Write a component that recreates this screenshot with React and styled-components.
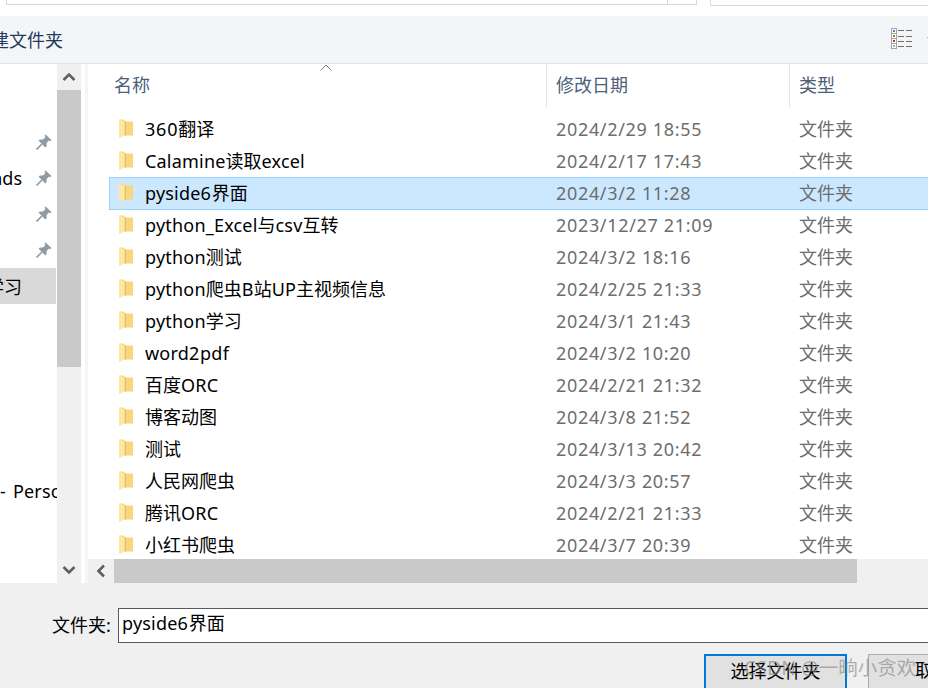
import React from "react";
import styled, { createGlobalStyle } from "styled-components";

const Global = createGlobalStyle`
  html, body { margin: 0; padding: 0; height: 688px; overflow: hidden; background: #fff; }
  body { font-family: "Noto Sans", "Noto Sans CJK SC", sans-serif; font-size: 18px; }
  #root { height: 688px; overflow: hidden; }
`;

const Dialog = styled.div`
  position: relative;
  width: 928px;
  height: 688px;
  display: flex;
  flex-direction: column;
  overflow: hidden;
`;

const TopStrip = styled.div`
  height: 16px;
  flex: none;
  display: flex;
  gap: 13px;
  padding-left: 6px;
  background: #fff;
`;
const PathBox = styled.div`
  width: 691px;
  height: 5px;
  box-sizing: border-box;
  display: flex;
  justify-content: flex-end;
  border-left: 1px solid #d9d9d9;
  border-right: 1px solid #d9d9d9;
  border-bottom: 1px solid #d9d9d9;
`;
const PathDrop = styled.div`
  width: 28px;
  border-left: 1px solid #d9d9d9;
`;
const SearchBox = styled.div`
  flex: 1;
  height: 5px;
  border-left: 1px solid #d9d9d9;
  border-bottom: 1px solid #d9d9d9;
`;

const Toolbar = styled.div`
  height: 48px;
  flex: none;
  box-sizing: border-box;
  display: flex;
  align-items: center;
  justify-content: space-between;
  padding-bottom: 2px;
  background: #f4f5f7;
  border-bottom: 1px solid #e3e3e3;
  color: #1e3a5c;
`;
const NewFolder = styled.div`
  margin-left: -27px;
  white-space: nowrap;
`;
const ViewButton = styled.div`
  display: flex;
`;

const Body = styled.div`
  height: 519px;
  flex: none;
  display: flex;
  background: #fff;
`;
const Sidebar = styled.div`
  width: 57px;
  flex: none;
  overflow: hidden;
  padding-top: 60px;
  box-sizing: border-box;
`;
const NavRow = styled.div`
  height: 36px;
  width: 56px;
  display: grid;
  grid-template-columns: 22px 14px 16px;
  align-items: center;
  background: ${(p) => (p.$active ? "#d9d9d9" : "transparent")};
  color: #000;
`;
const NavLabel = styled.div`
  display: flex;
  justify-content: flex-end;
  overflow: hidden;
  white-space: nowrap;
`;
const NavFree = styled.div`
  margin-top: 169px;
  height: 36px;
  line-height: 36px;
  white-space: nowrap;
  letter-spacing: 0.2px;
  word-spacing: 2px;
  color: #000;
`;
const PinSlot = styled.div`
  grid-column: 3;
  display: flex;
`;

const VScroll = styled.div`
  width: 24px;
  flex: none;
  display: flex;
  flex-direction: column;
  background: #f0f0f0;
`;
const ScrollBtn = styled.div`
  height: 26px;
  flex: none;
  display: flex;
  align-items: center;
  justify-content: center;
`;
const VTrack = styled.div`
  flex: 1;
  padding-bottom: 190px;
  display: flex;
`;
const VThumb = styled.div`
  flex: 1;
  background: #c9c9c9;
`;
const Splitter = styled.div`
  width: 7px;
  flex: none;
  background: linear-gradient(to right, #fff 4px, #f5f5f5 4px);
`;

const Main = styled.div`
  flex: 1;
  min-width: 0;
  display: flex;
  flex-direction: column;
`;
const ListArea = styled.div`
  flex: 1;
  min-height: 0;
  overflow: hidden;
`;
const Columns = `
  display: grid;
  grid-template-columns: 437px 243px 1fr;
  margin-left: 21px;
`;
const Header = styled.div`
  ${Columns}
  position: relative;
  height: 40px;
  margin-bottom: 9px;
  color: #4c607a;
`;
const HeadCell = styled.div`
  box-sizing: border-box;
  padding-left: ${(p) => (p.$first ? "5px" : "9px")};
  border-left: ${(p) => (p.$first ? "none" : "1px solid #e5e5e5")};
  line-height: 43px;
`;
const SortArrow = styled.svg`
  position: absolute;
  left: 211px;
  top: 0;
`;
const Row = styled.div`
  ${Columns}
  height: 32px;
  line-height: 32px;
  background: ${(p) => (p.$selected ? "#cce8ff" : "transparent")};
  box-shadow: ${(p) =>
    p.$selected
      ? "inset 0 1px #99d1ff, inset 1px 0 #99d1ff, 0 1px #99d1ff"
      : "none"};
`;
const NameCell = styled.div`
  display: flex;
  align-items: center;
  gap: 11px;
  padding-left: 9px;
  color: #000;
  white-space: nowrap;
`;
const MetaCell = styled.div`
  padding-left: 10px;
  color: #6d6d6d;
  white-space: nowrap;
  letter-spacing: ${(p) => (p.$date ? "0.67px" : "0")};
`;
const Digits = styled.span`
  letter-spacing: 0.8px;
`;
const Letters = styled.span`
  letter-spacing: 0.2px;
`;

const HScroll = styled.div`
  height: 24px;
  flex: none;
  display: flex;
  background: #f0f0f0;
`;
const HBtn = styled.div`
  width: 26px;
  flex: none;
  display: flex;
  align-items: center;
  justify-content: center;
`;
const HThumb = styled.div`
  width: 743px;
  background: #c9c9c9;
`;

const Footer = styled.div`
  flex: 1;
  background: #f0f0f0;
  padding-top: 25px;
  display: flex;
  flex-direction: column;
  gap: 11px;
`;
const FieldRow = styled.div`
  display: flex;
  align-items: center;
  padding-left: 52px;
  gap: 7px;
  color: #000;
`;
const FieldLabel = styled.div`
  white-space: nowrap;
  width: 59px;
  padding-bottom: 3px;
`;
const FieldInput = styled.div`
  flex: 1;
  height: 35px;
  box-sizing: border-box;
  margin-right: -4px;
  background: #fff;
  border: 1px solid #5a5a5a;
  border-right: none;
  padding-left: 3px;
  line-height: 29px;
`;
const ButtonRow = styled.div`
  display: flex;
  padding-left: 704px;
  gap: 21px;
`;
const DialogButton = styled.div`
  box-sizing: border-box;
  flex: none;
  height: 40px;
  background: #e1e1e1;
  border: ${(p) => (p.$primary ? "2px solid #0078d7" : "1px solid #adadad")};
  color: #000;
  white-space: nowrap;
  width: ${(p) => (p.$primary ? "143px" : "100px")};
  padding-left: ${(p) => (p.$primary ? "0" : "46px")};
  line-height: 31px;
  text-align: ${(p) => (p.$primary ? "center" : "left")};
`;
const Watermark = styled.div`
  position: absolute;
  left: 744px;
  top: 654px;
  font-size: 19.5px;
  line-height: 28px;
  color: rgba(130, 130, 130, 0.62);
  white-space: nowrap;
`;

const Pin = () => (
  <svg width="16" height="16" viewBox="0 0 16 16">
    <path
      d="M9.5 0.5L15.5 6L14.3 7.2L13 6.6L10.6 9L10.6 12.3L9.4 13.5L2.6 6.8L3.8 5.6L7 5.6L9.4 3.2L8.6 1.6Z"
      fill="#8f9aa3"
    />
    <path d="M6 10L0.5 15.5" stroke="#8f9aa3" strokeWidth="1.6" />
  </svg>
);

const Folder = () => (
  <svg width="16" height="20" viewBox="0 0 16 20" style={{ flex: "none" }}>
    <path d="M1 0.5H6L7 2.5H15V16.5H1Z" fill="#f6d67f" />
    <rect x="6.5" y="2.5" width="1.5" height="14" fill="#e9bf5e" />
    <path d="M1 0.5L6.5 2.5V16.5L1 19.5Z" fill="#fde7a3" />
  </svg>
);

const Chevron = ({ d }) => (
  <svg width="14" height="12" viewBox="0 0 14 12">
    <path d={d} fill="none" stroke="#5f5f5f" strokeWidth="2.6" />
  </svg>
);

const ViewIcon = () => (
  <svg width="37" height="22" viewBox="0 0 37 22">
    <rect x="0.5" y="0.5" width="5" height="20" fill="#fff" stroke="#a6a6a6" />
    <path d="M0 5.5H6M0 10.5H6M0 15.5H6" stroke="#a6a6a6" />
    <rect x="2" y="2" width="2" height="2" fill="#3f86c6" />
    <rect x="2" y="7" width="2" height="2" fill="#8a8a2c" />
    <rect x="2" y="12" width="2" height="2" fill="#c0361c" />
    <rect x="2" y="17" width="2" height="2" fill="#9fb4c8" />
    <path
      d="M7 2.5H13M15 2.5H21M7 8.5H13M15 8.5H21M7 13.5H13M15 13.5H21M7 18.5H13M15 18.5H21"
      stroke="#6e6e6e"
    />
    <path d="M36 9.5H37" stroke="#b0b0b0" />
  </svg>
);

const Spaced = ({ text }) => (
  <span>
    {text.split(/(\d+|[A-Za-z_]+)/).map((part, i) =>
      /^\d/.test(part) ? (
        <Digits key={i}>{part}</Digits>
      ) : /^[A-Za-z_]/.test(part) ? (
        <Letters key={i}>{part}</Letters>
      ) : (
        part
      )
    )}
  </span>
);

const rows = [
  ["360翻译", "2024/2/29 18:55"],
  ["Calamine读取excel", "2024/2/17 17:43"],
  ["pyside6界面", "2024/3/2 11:28", true],
  ["python_Excel与csv互转", "2023/12/27 21:09"],
  ["python测试", "2024/3/2 18:16"],
  ["python爬虫B站UP主视频信息", "2024/2/25 21:33"],
  ["python学习", "2024/3/1 21:43"],
  ["word2pdf", "2024/3/2 10:20"],
  ["百度ORC", "2024/2/21 21:32"],
  ["博客动图", "2024/3/8 21:52"],
  ["测试", "2024/3/13 20:42"],
  ["人民网爬虫", "2024/3/3 20:57"],
  ["腾讯ORC", "2024/2/21 21:33"],
  ["小红书爬虫", "2024/3/7 20:39"],
];

export default function App() {
  return (
    <Dialog>
      <Global />
      <TopStrip>
        <PathBox>
          <PathDrop />
        </PathBox>
        <SearchBox />
      </TopStrip>
      <Toolbar>
        <NewFolder>新建文件夹</NewFolder>
        <ViewButton>
          <ViewIcon />
        </ViewButton>
      </Toolbar>
      <Body>
        <Sidebar>
          {[null, "Downloads", null, null].map((t, i) => (
            <NavRow key={i}>
              <NavLabel>{t}</NavLabel>
              <PinSlot>
                <Pin />
              </PinSlot>
            </NavRow>
          ))}
          <NavRow $active>
            <NavLabel>学习</NavLabel>
          </NavRow>
          <NavFree>- Personal</NavFree>
        </Sidebar>
        <VScroll>
          <ScrollBtn>
            <Chevron d="M1.5 9L7 3.5L12.5 9" />
          </ScrollBtn>
          <VTrack>
            <VThumb />
          </VTrack>
          <ScrollBtn>
            <Chevron d="M1.5 3L7 8.5L12.5 3" />
          </ScrollBtn>
        </VScroll>
        <Splitter />
        <Main>
          <ListArea>
            <Header>
              <HeadCell $first>名称</HeadCell>
              <HeadCell>修改日期</HeadCell>
              <HeadCell>类型</HeadCell>
              <SortArrow width="12" height="8" viewBox="0 0 12 8">
                <path d="M0.5 6.5L6 1L11.5 6.5" fill="none" stroke="#7a7a7a" />
              </SortArrow>
            </Header>
            {rows.map(([name, date, selected]) => (
              <Row key={name} $selected={selected}>
                <NameCell>
                  <Folder />
                  <Spaced text={name} />
                </NameCell>
                <MetaCell $date>{date}</MetaCell>
                <MetaCell>文件夹</MetaCell>
              </Row>
            ))}
          </ListArea>
          <HScroll>
            <HBtn>
              <svg width="12" height="14" viewBox="0 0 12 14">
                <path d="M9 1.5L3.5 7L9 12.5" fill="none" stroke="#5f5f5f" strokeWidth="2.6" />
              </svg>
            </HBtn>
            <HThumb />
          </HScroll>
        </Main>
      </Body>
      <Footer>
        <FieldRow>
          <FieldLabel>文件夹:</FieldLabel>
          <FieldInput>
            <Spaced text="pyside6界面" />
          </FieldInput>
        </FieldRow>
        <ButtonRow>
          <DialogButton $primary>选择文件夹</DialogButton>
          <DialogButton>取消</DialogButton>
        </ButtonRow>
      </Footer>
      <Watermark>CSDN @一晌小贪欢</Watermark>
    </Dialog>
  );
}
